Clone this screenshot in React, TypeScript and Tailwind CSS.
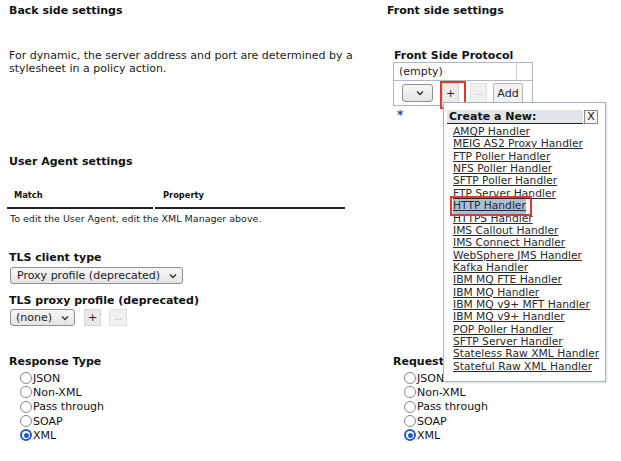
import React from "react";

const Chevron = () => (
  <svg width="8" height="6" viewBox="0 0 8 6" className="shrink-0">
    <polyline points="1,1.5 4,4.5 7,1.5" fill="none" stroke="#333" strokeWidth="1.4" />
  </svg>
);

const Radio = ({ label, checked }: { label: string; checked?: boolean }) => (
  <div className="flex items-center h-[14.3px]">
    {checked ? (
      <span className="w-[12px] h-[12px] rounded-full border-2 border-[#1d5fc4] bg-white flex items-center justify-center shrink-0">
        <span className="w-[5px] h-[5px] rounded-full bg-[#1d5fc4]" />
      </span>
    ) : (
      <span className="w-[12px] h-[12px] rounded-full border-[1.5px] border-[#888] bg-white shrink-0" />
    )}
    <span className="ml-[1px] text-[11px] leading-[13px] text-[#111]">{label}</span>
  </div>
);

const items = [
  "AMQP Handler",
  "MEIG AS2 Proxy Handler",
  "FTP Poller Handler",
  "NFS Poller Handler",
  "SFTP Poller Handler",
  "FTP Server Handler",
  "HTTP Handler",
  "HTTPS Handler",
  "IMS Callout Handler",
  "IMS Connect Handler",
  "WebSphere JMS Handler",
  "Kafka Handler",
  "IBM MQ FTE Handler",
  "IBM MQ Handler",
  "IBM MQ v9+ MFT Handler",
  "IBM MQ v9+ Handler",
  "POP Poller Handler",
  "SFTP Server Handler",
  "Stateless Raw XML Handler",
  "Stateful Raw XML Handler",
];

const types = ["JSON", "Non-XML", "Pass through", "SOAP", "XML"];

export default function App() {
  return (
    <div className="relative w-[621px] h-[461px] bg-white overflow-hidden font-['DejaVu_Sans',sans-serif] text-[#111]">
      <div className="flex">
        {/* Left column */}
        <div className="w-[387px] shrink-0 pl-[9px] flex flex-col">
          <div className="mt-[4px] text-[11px] leading-[13px] font-bold">Back side settings</div>
          <div className="mt-[32px] text-[11px] leading-[13px] text-[#222]">
            <div>For dynamic, the server address and port are determined by a</div>
            <div>stylesheet in a policy action.</div>
          </div>

          <div className="mt-[80px] text-[11px] leading-[13px] font-bold">User Agent settings</div>
          <div className="mt-[22px] -ml-[2px] flex gap-[2px] w-[338px]">
            <div className="w-[146px] h-[19px] border-b-2 border-[#222] pl-[7px] text-[8.3px] leading-[10px] font-bold">
              Match
            </div>
            <div className="flex-1 h-[19px] border-b-2 border-[#222] pl-[8px] text-[8.3px] leading-[10px] font-bold">
              Property
            </div>
          </div>
          <div className="mt-[4px] ml-[1px] text-[9.5px] leading-[12px] text-[#222]">
            To edit the User Agent, edit the XML Manager above.
          </div>

          <div className="mt-[26px] text-[11px] leading-[13px] font-bold">TLS client type</div>
          <div className="mt-[3px] ml-[1px] w-[173px] h-[17px] border border-[#8f8f8f] rounded-[3px] bg-gradient-to-b from-[#f7f7f7] to-[#e4e4e4] flex items-center pl-[6px] pr-[5px] justify-between">
            <span className="text-[11px] leading-[13px] text-[#222]">Proxy profile (deprecated)</span>
            <Chevron />
          </div>

          <div className="mt-[10px] text-[11px] leading-[13px] font-bold">TLS proxy profile (deprecated)</div>
          <div className="mt-[2px] ml-[1px] flex items-center">
            <div className="w-[65px] h-[17px] border border-[#8f8f8f] rounded-[3px] bg-gradient-to-b from-[#f7f7f7] to-[#e4e4e4] flex items-center pl-[5px] pr-[5px] justify-between">
              <span className="text-[11px] leading-[13px] text-[#222]">(none)</span>
              <Chevron />
            </div>
            <div className="ml-[9px] w-[17px] h-[17px] bg-[#e9e9e9] border border-[#d6d6d6] flex items-center justify-center text-[11px] leading-[13px] text-[#222]">
              +
            </div>
            <div className="ml-[8px] w-[18px] h-[17px] bg-[#f0f0f0] border border-[#e0e0e0] flex items-center justify-center text-[8px] leading-[10px] text-[#aaa]">
              ...
            </div>
          </div>

          <div className="mt-[29px] text-[11px] leading-[13px] font-bold">Response Type</div>
          <div className="mt-[3px] ml-[11px] flex flex-col">
            {types.map((t) => (
              <Radio key={t} label={t} checked={t === "XML"} />
            ))}
          </div>
        </div>

        {/* Right column */}
        <div className="flex-1 flex flex-col">
          <div className="mt-[4px] text-[11px] leading-[13px] font-bold">Front side settings</div>
          <div className="mt-[32px] ml-[7px] text-[11px] leading-[13px] font-bold">Front Side Protocol</div>
          <div className="ml-[6px] w-[140px] h-[44px] border border-[#a9b9c9] flex flex-col">
            <div className="h-[18px] flex border-b border-[#a9b9c9]">
              <div className="w-[123px] border-r border-[#c5d0db] pl-[5px] text-[11px] leading-[17px] text-[#222]">
                (empty)
              </div>
              <div className="flex-1" />
            </div>
            <div className="flex items-start pl-[8px]">
              <div className="mt-[3px] w-[31px] h-[18px] border border-[#8f8f8f] rounded-[3px] bg-gradient-to-b from-[#f7f7f7] to-[#e4e4e4] flex items-center justify-center pl-[4px]">
                <Chevron />
              </div>
              <div className="relative mt-[2px] ml-[9px] w-[17px] h-[20px] bg-[#ececec] border border-[#d6d6d6] flex items-center justify-center text-[11px] leading-[13px] text-[#222]">
                +
                <div className="absolute -left-[3px] -top-[3px] w-[26px] h-[28px] border-2 border-[#e2392c]" />
              </div>
              <div className="mt-[2px] ml-[11px] w-[17px] h-[20px] bg-[#f0f0f0] border border-[#e2e2e2] flex items-center justify-center text-[8px] leading-[10px] text-[#aaa]">
                ...
              </div>
              <div className="mt-[2px] ml-[6px] w-[30px] h-[20px] bg-[#f2f2f2] border border-[#b5b5b5] rounded-[2px] flex items-center justify-center text-[11px] leading-[13px] text-[#222]">
                Add
              </div>
            </div>
          </div>
          <div className="mt-[2px] ml-[10px] text-[12px] leading-[14px] font-bold text-[#3d3d8f]">*</div>

          <div className="mt-[233px] ml-[6px] whitespace-nowrap text-[11px] leading-[13px] font-bold">
            Request Type
          </div>
          <div className="mt-[3px] ml-[17px] flex flex-col">
            {types.map((t) => (
              <Radio key={t} label={t} checked={t === "XML"} />
            ))}
          </div>
        </div>
      </div>

      {/* Popup */}
      <div className="absolute left-[443px] top-[102px] w-[163px] h-[280px] border border-[#a3b4c6] bg-white shadow-[1px_1px_2px_rgba(0,0,0,0.15)]">
        <div className="pt-[7px] pl-[3px] flex items-start">
          <div className="w-[136px] h-[14px] bg-[#e3e5ec] border-b border-[#222] pl-[2px] text-[11px] leading-[13px] font-bold text-[#111]">
            Create a New:
          </div>
          <div className="ml-[1px] w-[14px] h-[14px] border border-[#8a8a8a] bg-[#f4f4f4] flex items-center justify-center text-[11px] leading-[12px] text-[#111]">
            X
          </div>
        </div>
        <div className="pl-[9px] pt-[2px] flex flex-col items-start">
          {items.map((it) =>
            it === "HTTP Handler" ? (
              <div key={it} className="relative h-[12.37px] flex items-center">
                <span className="text-[10.7px] leading-[12.37px] underline text-[#2a2a2a] bg-[#a9bfdc] py-[1px]">{it}</span>
                <div className="absolute -left-[3px] -top-[4px] w-[82px] h-[20px] border-2 border-[#e2392c]" />
              </div>
            ) : (
              <div key={it} className="h-[12.37px] flex items-center">
                <span className="text-[10.7px] leading-[12.37px] underline text-[#2a2a2a]">{it}</span>
              </div>
            )
          )}
        </div>
      </div>
    </div>
  );
}
